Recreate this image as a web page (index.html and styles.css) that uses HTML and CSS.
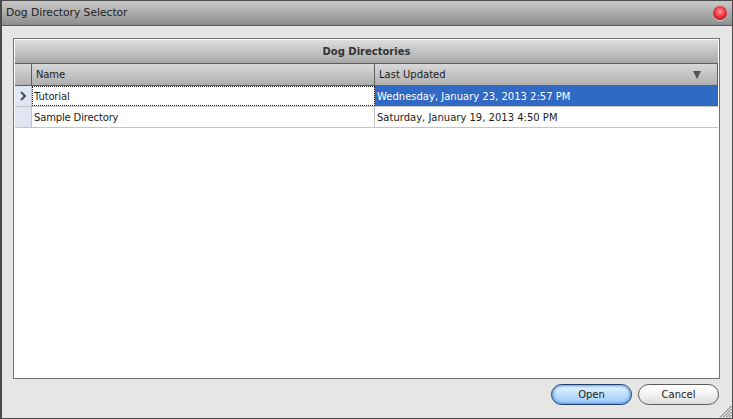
FILE: index.html
```html
<!DOCTYPE html>
<html lang="en">
<head>
  <meta charset="UTF-8" />
  <title>Dog Directory Selector</title>
  <link rel="stylesheet" href="styles.css">
</head>
<body>
  <div class="window">
    <div class="titlebar">
      <span class="title">Dog Directory Selector</span>
      <span class="close"></span>
    </div>
    <div class="content">
      <div class="panel">
        <div class="caption">Dog Directories</div>
        <div class="row head">
          <div class="gutter"></div>
          <div class="cell name">Name</div>
          <div class="cell updated">
            <span>Last Updated</span>
            <span class="sort"></span>
          </div>
        </div>
        <div class="row data">
          <div class="gutter">
            <svg width="7" height="10" viewBox="0 0 7 10"><path d="M1 1 L5 5 L1 9" fill="none" stroke="#454b55" stroke-width="2"/></svg>
          </div>
          <div class="cell name focused">Tutorial</div>
          <div class="cell updated selected">Wednesday, January 23, 2013 2:57 PM</div>
        </div>
        <div class="row data">
          <div class="gutter"></div>
          <div class="cell name">Sample Directory</div>
          <div class="cell updated">Saturday, January 19, 2013 4:50 PM</div>
        </div>
      </div>
      <div class="actions">
        <button class="primary">Open</button>
        <button>Cancel</button>
      </div>
      <svg class="grip" width="13" height="13" viewBox="0 0 13 13">
        <path d="M12.5 1 L1 12.5 M12.5 4 L4 12.5 M12.5 7 L7 12.5 M12.5 10 L10 12.5" stroke="#6a6a6a" fill="none"/>
      </svg>
    </div>
  </div>
</body>
</html>
```

FILE: styles.css
```css
:root {
  --border-dark: #4a4a4a;
  --border-mid: #747474;
  --grid-line: #c4c4c4;
  --text: #1c1c1c;
  --select-blue: #316ac5;
}

body {
  margin: 0;
  font-family: "DejaVu Sans", sans-serif;
  font-size: 10px;
  color: var(--text);
  background: #e6e6e6;
}

.window {
  width: 733px;
  height: 419px;
  box-sizing: border-box;
  border: 1px solid var(--border-dark);
  border-left-width: 2px;
  display: flex;
  flex-direction: column;
  overflow: hidden;
}

/* Title bar */
.titlebar {
  height: 25px;
  flex: none;
  box-sizing: border-box;
  border-bottom: 1px solid #5a5a5a;
  background: linear-gradient(#c9c9c9, #8d8d8d);
  display: flex;
  align-items: center;
  justify-content: space-between;
  padding: 0 5px 1px 4px;
}
.title {
  font-size: 10.7px;
  color: #222;
}
.close {
  width: 14px;
  height: 14px;
  border-radius: 50%;
  background: radial-gradient(circle at 50% 40%, #ff9aa2 0%, #f0404c 40%, #c81c26 70%, #7c1016 100%);
  box-shadow: 0 1px 1px rgba(255, 255, 255, 0.5);
}

/* Main area */
.content {
  flex: 1;
  display: flex;
  flex-direction: column;
  padding: 12px 12px 0 11px;
  position: relative;
  min-height: 0;
}

.panel {
  height: 341px;
  box-sizing: border-box;
  flex: none;
  background: #fff;
  border: 1px solid var(--border-mid);
  padding: 1px;
}

.caption {
  height: 24px;
  box-sizing: border-box;
  background: linear-gradient(#dedede, #a9a9a9);
  border-bottom: 1px solid #5e5e5e;
  text-align: center;
  font-weight: bold;
  line-height: 24px;
  color: #333;
}

.row {
  display: flex;
  box-sizing: border-box;
}
.head {
  height: 22px;
  background: linear-gradient(#d8d8d8, #b0b0b0);
  border-bottom: 1px solid #5e5e5e;
}
.data {
  height: 21px;
  border-bottom: 1px solid var(--grid-line);
}

.gutter {
  width: 17px;
  flex: none;
  box-sizing: border-box;
  display: flex;
  align-items: center;
  justify-content: center;
  background: #e1e6f3;
  border-right: 1px solid var(--grid-line);
}
.head .gutter {
  background: none;
  border-right-color: #5e5e5e;
}

.cell {
  box-sizing: border-box;
  display: flex;
  align-items: center;
  white-space: nowrap;
}
.name {
  width: 343px;
  flex: none;
  padding-left: 2px;
  letter-spacing: -0.15px;
  border-right: 1px solid var(--grid-line);
}
.updated {
  flex: 1;
  padding-left: 2px;
}
.head .name {
  padding-left: 4px;
  border-right-color: #5e5e5e;
}
.head .updated {
  padding-left: 4px;
  justify-content: space-between;
  border-right: 1px solid #5e5e5e;
}

.sort {
  width: 0;
  height: 0;
  margin-right: 16px;
  border-left: 4px solid transparent;
  border-right: 4px solid transparent;
  border-top: 8px solid #555;
}

.focused {
  outline: 1px dotted #222;
  outline-offset: -1px;
}
.selected {
  background: var(--select-blue);
  color: #fff;
}

/* Buttons */
.actions {
  display: flex;
  justify-content: flex-end;
  gap: 6px;
  padding: 5px 1px 0 0;
}
.actions button {
  width: 81px;
  height: 21px;
  padding: 0;
  font: inherit;
  color: #222;
  border: 1px solid #5b5b5b;
  border-radius: 11px;
  background: linear-gradient(#ffffff, #f2f2f2 50%, #dcdcdc);
}
.actions .primary {
  border-color: #1f3f6a;
  background: linear-gradient(#f2f9ff, #c3e1fc 45%, #9fcdf8);
  box-shadow: inset 0 0 3px 1px #4a97e6;
}

.grip {
  position: absolute;
  right: 0;
  bottom: 0;
}
```
